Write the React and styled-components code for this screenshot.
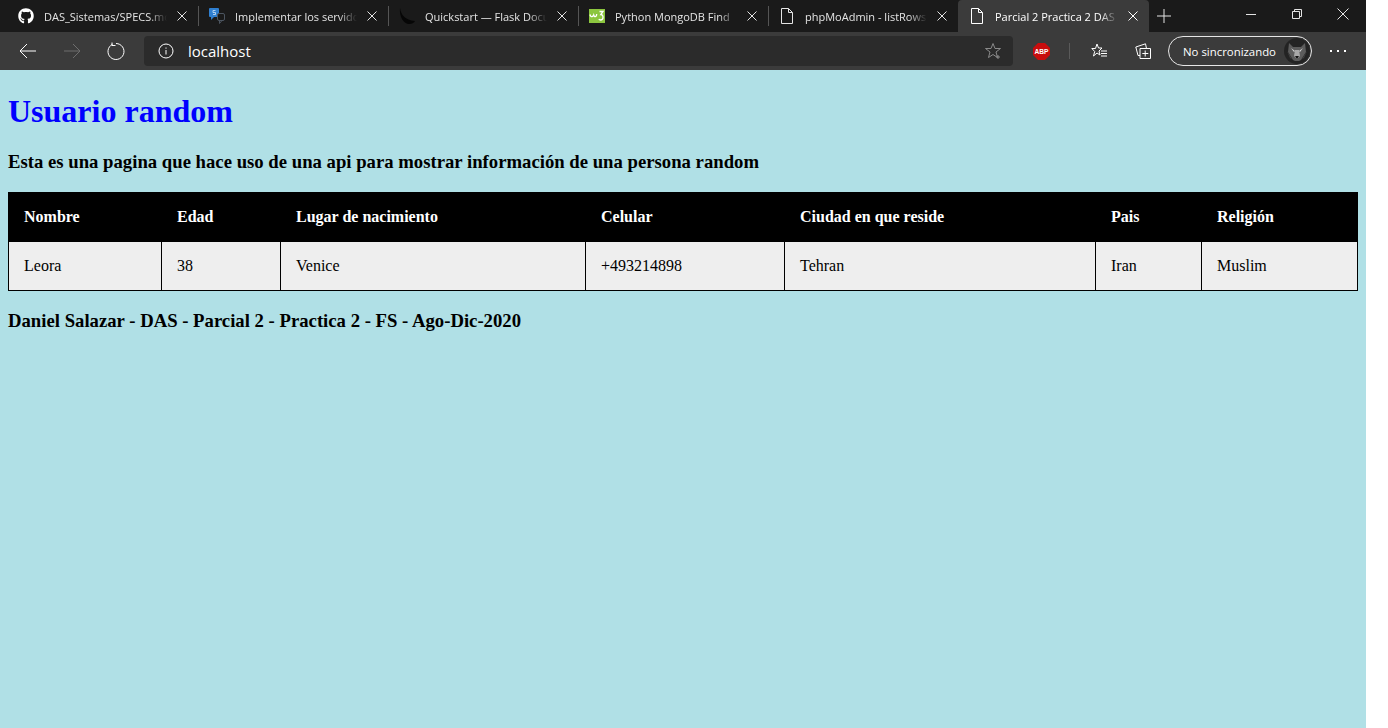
import React from 'react';
import styled, { createGlobalStyle } from 'styled-components';
import { FaGithub } from 'react-icons/fa';

const GlobalStyle = createGlobalStyle`
  html, body {
    margin: 0;
    padding: 0;
    background: #fff;
  }
`;

const Screen = styled.div`
  width: 1366px;
  height: 728px;
  display: flex;
  flex-direction: column;
  overflow: hidden;
`;

const TabStrip = styled.div`
  height: 32px;
  background: #1a1a1a;
  display: flex;
  align-items: center;
  padding-left: 8px;
  font-family: 'Open Sans', 'Noto Sans', sans-serif;
  font-size: 11px;
  color: #e4e4e4;
`;

const Tab = styled.div`
  width: 189px;
  height: 32px;
  flex: none;
  box-sizing: border-box;
  display: flex;
  align-items: center;
  padding: 0 11px 0 10px;
  gap: 10px;
  &:first-child {
    width: 190px;
  }
  ${(p) => p.$active && `
    width: 191px;
    padding-left: 11px;
    background: #3b3b3b;
    border-radius: 4px 4px 0 0;
    color: #fff;
  `}
`;

const TabSeparator = styled.div`
  width: 1px;
  height: 20px;
  flex: none;
  background: #555;
`;

const TabIcon = styled.span`
  width: 16px;
  height: 16px;
  flex: none;
  display: flex;
  align-items: center;
  justify-content: center;
`;

const TabTitle = styled.span`
  flex: 1;
  min-width: 0;
  white-space: nowrap;
  overflow: hidden;
  -webkit-mask-image: linear-gradient(to right, #000 85%, transparent);
  mask-image: linear-gradient(to right, #000 85%, transparent);
`;

const WindowControls = styled.div`
  margin-left: auto;
  display: flex;
  height: 32px;
`;

const NewTab = styled.div`
  width: 30px;
  display: flex;
  align-items: center;
  justify-content: center;
`;

const WindowButton = styled.div`
  width: 46px;
  height: 28px;
  display: flex;
  align-items: center;
  justify-content: center;
`;

const Toolbar = styled.div`
  height: 38px;
  background: #3b3b3b;
  display: flex;
  align-items: center;
  font-family: 'Open Sans', 'Noto Sans', sans-serif;
  color: #fff;
`;

const NavButton = styled.div`
  width: 44px;
  height: 30px;
  flex: none;
  display: flex;
  align-items: center;
  justify-content: center;
  color: ${(p) => (p.$disabled ? '#6e6e6e' : '#fff')};
`;

const NavGroup = styled.div`
  display: flex;
  padding-left: 6px;
  margin-right: 6px;
`;

const AddressBar = styled.div`
  width: 869px;
  height: 30px;
  flex: none;
  background: #2b2b2b;
  border-radius: 4px;
  display: flex;
  align-items: center;
  padding: 0 10px 0 14px;
  box-sizing: border-box;
`;

const Url = styled.span`
  margin-left: 14px;
  font-size: 15px;
  flex: 1;
`;

const ToolIcon = styled.div`
  width: ${(p) => p.$w || 44}px;
  height: 30px;
  flex: none;
  display: flex;
  align-items: center;
  justify-content: center;
`;

const Divider = styled.div`
  width: 1px;
  height: 16px;
  flex: none;
  background: #5a5a5a;
`;

const ProfilePill = styled.div`
  width: 144px;
  height: 30px;
  flex: none;
  box-sizing: border-box;
  border: 1px solid #e6e6e6;
  border-radius: 15px;
  display: flex;
  align-items: center;
  justify-content: space-between;
  padding: 0 1px 0 14px;
  font-size: 11.4px;
`;

const Page = styled.main`
  flex: 1;
  background: #b0e0e6;
  padding: 8px 8px 0;
  font-family: 'Liberation Serif', 'Times New Roman', serif;
  color: #000;
`;

const Title = styled.h1`
  margin: 15px 0 0;
  font-size: 32px;
  line-height: 37px;
  font-weight: bold;
  color: #0000ff;
`;

const Subtitle = styled.h3`
  margin: 21px 0 0;
  font-size: 18.72px;
  line-height: 22px;
  font-weight: bold;
`;

const DataTable = styled.table`
  margin-top: 19px;
  width: 1349px;
  border-collapse: collapse;
  table-layout: fixed;
  font-size: 16px;
`;

const HeadCell = styled.th`
  height: 49px;
  padding: 0 15px;
  box-sizing: border-box;
  background: #000;
  color: #fff;
  text-align: left;
  font-weight: bold;
  border: 1px solid #000;
`;

const Cell = styled.td`
  height: 49px;
  padding: 0 15px;
  box-sizing: border-box;
  background: #eee;
  border: 1px solid #000;
`;

const Footer = styled.h3`
  margin: 19px 0 0;
  font-size: 18.72px;
  line-height: 22px;
  font-weight: bold;
`;

const stroke = { fill: 'none', stroke: 'currentColor', strokeWidth: 1 };

const PageIcon = () => (
  <svg width="14" height="16" viewBox="0 0 14 16" {...stroke}>
    <path d="M1.5.5h7l4 4v11h-11z" />
    <path d="M8.5.5v4h4" />
  </svg>
);

const CloseIcon = ({ size = 10 }) => (
  <svg width={size} height={size} viewBox="0 0 10 10" {...stroke} style={{ flex: 'none' }}>
    <path d="M.5.5l9 9M9.5.5l-9 9" />
  </svg>
);

const ChatIcon = () => (
  <svg width="16" height="16" viewBox="0 0 16 16">
    <rect x="0" y="0" width="10" height="9" rx="1" fill="#2f7fd0" />
    <path d="M2 9v3l3-3z" fill="#2f7fd0" />
    <rect x="8.500" y="5.500" width="7" height="7" rx="1.500" fill="#1a1a1a" stroke="#4c5560" />
    <path d="M10.500 12.500v3l2.500-3" fill="none" stroke="#4c5560" />
    <path d="M6.500 2.500H4v2h2.500v2H4" fill="none" stroke="#cfe3f7" strokeWidth=".8" />
  </svg>
);

const FlaskIcon = () => (
  <svg width="16" height="16" viewBox="0 0 16 16" fill="#060606">
    <path d="M1 0c1 7 5 12 15 13-1 2-3 3-6 3C5 16 0 9 1 0z" />
  </svg>
);

const W3Icon = () => (
  <svg width="16" height="16" viewBox="0 0 16 16">
    <rect width="16" height="14" y="1" fill="#8cc63f" />
    <path d="M1 6.500c.5 2 1.500 2.500 2.500 2 .5-.5 1-1 1.200-1.500.3 1 .8 2 2 1.500.8-.5 1-1.500 1-2.500M10.500 3.500H14L11.800 6.500c3 0 3 5.500-.2 5.500-.8 0-1.500-.3-1.800-.8" fill="none" stroke="#fff" strokeWidth="1.300" />
  </svg>
);

const WolfAvatar = () => (
  <svg width="26" height="26" viewBox="0 0 26 26">
    <circle cx="13" cy="13" r="13" fill="#232323" />
    <path d="M5 5l4 4h8l4-4 1 9-5 8-2 1h-4l-2-1-5-8z" fill="#5c5c5c" />
    <path d="M7 10l4 3-1 1zM19 10l-4 3 1 1z" fill="#d8d8d8" />
    <path d="M11 12h4l1 6-3 3-3-3z" fill="#a8a8a8" />
    <path d="M11 18h4l-2 3z" fill="#111" />
    <path d="M3 13l3 7 2 1zM23 13l-3 7-2 1z" fill="#444" />
  </svg>
);

const tabs = [
  { title: 'DAS_Sistemas/SPECS.md', icon: <FaGithub size={16} color="#fff" /> },
  { title: 'Implementar los servidores', icon: <ChatIcon /> },
  { title: 'Quickstart — Flask Documentation', icon: <FlaskIcon /> },
  { title: 'Python MongoDB Find', icon: <W3Icon /> },
  { title: 'phpMoAdmin - listRows', icon: <PageIcon />, noSep: true },
  { title: 'Parcial 2 Practica 2 DAS Sistemas', icon: <PageIcon />, active: true, noSep: true },
];

const columns = [
  { label: 'Nombre', value: 'Leora', width: 153 },
  { label: 'Edad', value: '38', width: 119 },
  { label: 'Lugar de nacimiento', value: 'Venice', width: 305 },
  { label: 'Celular', value: '+493214898', width: 199 },
  { label: 'Ciudad en que reside', value: 'Tehran', width: 311 },
  { label: 'Pais', value: 'Iran', width: 106 },
  { label: 'Religión', value: 'Muslim', width: 156 },
];

export default function App() {
  return (
    <Screen>
      <GlobalStyle />
      <TabStrip>
        {tabs.map((tab) => (
          <React.Fragment key={tab.title}>
            <Tab $active={tab.active}>
              <TabIcon>{tab.icon}</TabIcon>
              <TabTitle>{tab.title}</TabTitle>
              <CloseIcon />
            </Tab>
            {!tab.noSep && <TabSeparator />}
          </React.Fragment>
        ))}
        <NewTab>
          <svg width="14" height="14" viewBox="0 0 14 14" {...stroke}>
            <path d="M7 0v14M0 7h14" />
          </svg>
        </NewTab>
        <WindowControls>
          <WindowButton>
            <svg width="10" height="10" viewBox="0 0 10 10" {...stroke}>
              <path d="M0 5.500h10" />
            </svg>
          </WindowButton>
          <WindowButton>
            <svg width="10" height="10" viewBox="0 0 10 10" {...stroke}>
              <path d="M.5 2.500h7v7h-7zM2.500 2.500v-2h7v7h-2" />
            </svg>
          </WindowButton>
          <WindowButton>
            <svg width="12" height="12" viewBox="0 0 12 12" {...stroke}>
              <path d="M.5.5l11 11M11.500.5l-11 11" />
            </svg>
          </WindowButton>
        </WindowControls>
      </TabStrip>
      <Toolbar>
        <NavGroup>
          <NavButton>
            <svg width="18" height="16" viewBox="0 0 18 16" {...stroke}>
              <path d="M17 8H1M8 1L1 8l7 7" />
            </svg>
          </NavButton>
          <NavButton $disabled>
            <svg width="18" height="16" viewBox="0 0 18 16" {...stroke}>
              <path d="M1 8h16M10 1l7 7-7 7" />
            </svg>
          </NavButton>
          <NavButton>
            <svg width="18" height="18" viewBox="0 0 18 18" {...stroke}>
              <path d="M5.500 2.300a8 8 0 1 0 3.500-.8M5 .5v3h3.500" />
            </svg>
          </NavButton>
        </NavGroup>
        <AddressBar>
          <svg width="16" height="16" viewBox="0 0 16 16" {...stroke} style={{ flex: 'none' }}>
            <circle cx="8" cy="8" r="7" />
            <path d="M8 7v4.500M8 4.500v1.200" />
          </svg>
          <Url>localhost</Url>
          <svg width="18" height="18" viewBox="0 0 18 18" fill="none" stroke="#8a8a8a" style={{ flex: 'none' }}>
            <path d="M8 1.500l2 5h5.500l-4.500 3.500 1.500 5.500L8 12.500l-4.500 3 1.500-5.500L.5 6.500H6zM13 13v4M11 15h4" />
          </svg>
        </AddressBar>
        <ToolIcon $w={56}>
          <svg width="17" height="17" viewBox="0 0 17 17">
            <path d="M5 0h7l5 5v7l-5 5H5l-5-5V5z" fill="#c80d0d" />
            <text x="8.500" y="11.200" textAnchor="middle" fontSize="7.500" fontWeight="bold" textLength="14" lengthAdjust="spacingAndGlyphs" fontFamily="'Liberation Sans', sans-serif" fill="#fff">ABP</text>
          </svg>
        </ToolIcon>
        <Divider />
        <ToolIcon $w={58}>
          <svg width="16" height="16" viewBox="0 0 16 16" {...stroke}>
            <path d="M6 1l1.500 4H11L8 8l1 4-3-2-3.500 3 1.200-4.500L.8 5.500h3.700zM10 8h6M10 10.500h6M10 13h6" />
          </svg>
        </ToolIcon>
        <ToolIcon $w={30}>
          <svg width="16" height="16" viewBox="0 0 16 16" {...stroke}>
            <path d="M5 5.500h10.500v10H5zM10.200 7.500v6M7.300 10.500h6" />
            <path d="M5 12.500H3L.8 4 10.500.8 11.500 5.500" />
          </svg>
        </ToolIcon>
        <ToolIcon $w={10} />
        <ProfilePill>
          No sincronizando
          <WolfAvatar />
        </ProfilePill>
        <ToolIcon $w={52}>
          <svg width="16" height="4" viewBox="0 0 16 4" fill="currentColor">
            <rect x="0" y="1" width="2" height="2" />
            <rect x="7" y="1" width="2" height="2" />
            <rect x="14" y="1" width="2" height="2" />
          </svg>
        </ToolIcon>
      </Toolbar>
      <Page>
        <Title>Usuario random</Title>
        <Subtitle>Esta es una pagina que hace uso de una api para mostrar información de una persona random</Subtitle>
        <DataTable>
          <colgroup>
            {columns.map((col) => (
              <col key={col.label} style={{ width: col.width }} />
            ))}
          </colgroup>
          <thead>
            <tr>
              {columns.map((col) => (
                <HeadCell key={col.label}>{col.label}</HeadCell>
              ))}
            </tr>
          </thead>
          <tbody>
            <tr>
              {columns.map((col) => (
                <Cell key={col.label}>{col.value}</Cell>
              ))}
            </tr>
          </tbody>
        </DataTable>
        <Footer>Daniel Salazar - DAS - Parcial 2 - Practica 2 - FS - Ago-Dic-2020</Footer>
      </Page>
    </Screen>
  );
}
